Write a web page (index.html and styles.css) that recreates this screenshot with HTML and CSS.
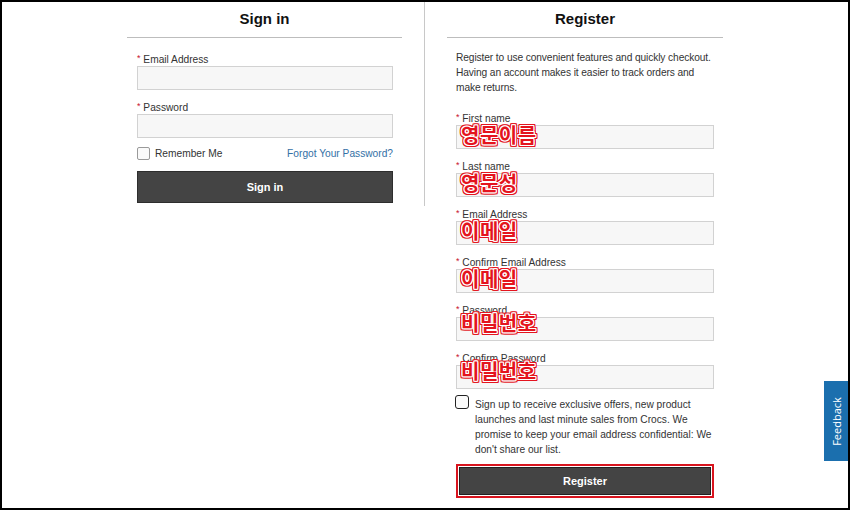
FILE: index.html
```html
<!DOCTYPE html>
<html lang="en">
<head>
    <meta charset="UTF-8">
    <meta name="viewport" content="width=device-width, initial-scale=1.0">
    <title>Sign in / Register</title>
    <link rel="stylesheet" href="styles.css">
</head>
<body>
    <div class="frame">
        <div class="account">
            <div class="column signin">
                <h2 class="title">Sign in</h2>
                <div class="field">
                    <label><span class="req">*</span> Email Address</label>
                    <input type="text">
                </div>
                <div class="field">
                    <label><span class="req">*</span> Password</label>
                    <input type="password">
                </div>
                <div class="remember-row">
                    <label class="check"><span class="box"></span> Remember Me</label>
                    <a href="#" class="forgot">Forgot Your Password?</a>
                </div>
                <button class="btn">Sign in</button>
            </div>

            <div class="column register">
                <h2 class="title">Register</h2>
                <p class="intro">Register to use convenient features and quickly checkout.<br>Having an account makes it easier to track orders and<br>make returns.</p>
                <div class="field">
                    <label><span class="req">*</span> First name</label>
                    <input type="text">
                    <span class="note">영문이름</span>
                </div>
                <div class="field">
                    <label><span class="req">*</span> Last name</label>
                    <input type="text">
                    <span class="note">영문성</span>
                </div>
                <div class="field">
                    <label><span class="req">*</span> Email Address</label>
                    <input type="text">
                    <span class="note">이메일</span>
                </div>
                <div class="field">
                    <label><span class="req">*</span> Confirm Email Address</label>
                    <input type="text">
                    <span class="note">이메일</span>
                </div>
                <div class="field">
                    <label><span class="req">*</span> Password</label>
                    <input type="password">
                    <span class="note low">비밀번호</span>
                </div>
                <div class="field">
                    <label><span class="req">*</span> Confirm Password</label>
                    <input type="password">
                    <span class="note low">비밀번호</span>
                </div>
                <div class="optin">
                    <span class="box dark"></span>
                    <p>Sign up to receive exclusive offers, new product launches and last minute sales from Crocs. We promise to keep your email address confidential: We don't share our list.</p>
                </div>
                <div class="btn-frame">
                    <button class="btn">Register</button>
                </div>
            </div>
        </div>
        <div class="feedback"><span>Feedback</span></div>
    </div>
</body>
</html>
```

FILE: styles.css
```css
* {
    box-sizing: border-box;
}
body {
    margin: 0;
    font-family: "Liberation Sans", Arial, sans-serif;
    color: #333;
    font-size: 10.2px;
}
.frame {
    position: relative;
    width: 850px;
    height: 510px;
    border: 2px solid #000;
    background: #fff;
    overflow: hidden;
}
.account {
    display: flex;
    align-items: flex-start;
    padding-left: 125px;
}
.column {
    width: 276px;
}
.signin {
    width: 298px;
    height: 204px;
    padding-right: 22px;
    border-right: 1px solid #c8c8c8;
    margin-right: 22px;
}
.title {
    margin: 0;
    height: 36px;
    padding-top: 8px;
    font-size: 15px;
    line-height: 17px;
    text-align: center;
    color: #111;
    border-bottom: 1px solid #bdbdbd;
}
.signin .title {
    margin-bottom: 13px;
}
.signin .field,
.signin .remember-row,
.signin .btn {
    margin-left: 10px;
    margin-right: 9px;
}
.register .title {
    margin-bottom: 12px;
}
.register > *:not(.title) {
    margin-left: 9px;
    margin-right: 9px;
}
.intro {
    margin-top: 0;
    margin-bottom: 15px;
    line-height: 15px;
    white-space: nowrap;
    letter-spacing: -0.1px;
}
.field {
    position: relative;
    margin-bottom: 9px;
}
.field label {
    display: block;
    height: 15px;
    line-height: 14px;
}
.req {
    color: #c8102e;
    font-size: 9px;
    vertical-align: 2px;
}
.field input {
    display: block;
    width: 100%;
    height: 24px;
    margin: 0;
    border: 1px solid #d2d2d2;
    background: #f7f7f7;
}
.note {
    position: absolute;
    left: 5px;
    top: 14px;
    font-family: "Noto Sans CJK KR", sans-serif;
    font-weight: 700;
    font-size: 20px;
    line-height: 21px;
    letter-spacing: 0.5px;
    color: #e4141e;
    text-shadow:
        1px 0 0 #fff, -1px 0 0 #fff, 0 1px 0 #fff, 0 -1px 0 #fff,
        1px 1px 0 #fff, -1px -1px 0 #fff, 1px -1px 0 #fff, -1px 1px 0 #fff,
        2px 0 0 #e4141e, -2px 0 0 #e4141e, 0 2px 0 #e4141e, 0 -2px 0 #e4141e,
        2px 2px 0 #e4141e, -2px -2px 0 #e4141e, 2px -2px 0 #e4141e, -2px 2px 0 #e4141e,
        2px 1px 0 #e4141e, -2px 1px 0 #e4141e, 1px 2px 0 #e4141e, 1px -2px 0 #e4141e,
        2px -1px 0 #e4141e, -2px -1px 0 #e4141e, -1px 2px 0 #e4141e, -1px -2px 0 #e4141e;
}
.note.low {
    top: 10px;
}
.remember-row {
    display: flex;
    align-items: center;
    justify-content: space-between;
    height: 13px;
    margin-bottom: 11px;
}
.check {
    display: flex;
    align-items: center;
    gap: 5px;
}
.box {
    display: inline-block;
    width: 13px;
    height: 13px;
    border: 1px solid #9a9a9a;
    border-radius: 2px;
    background: #fafafa;
}
.box.dark {
    flex: none;
    width: 14px;
    height: 14px;
    border: 1.5px solid #222;
    border-radius: 3px;
    margin-top: -2px;
    margin-left: -1px;
}
.forgot {
    color: #3470a5;
    text-decoration: none;
}
.btn {
    display: block;
    width: 256px;
    height: 32px;
    border: 1px solid #2d2d2d;
    background: #444;
    color: #fff;
    font-family: "Liberation Sans", Arial, sans-serif;
    font-weight: bold;
    font-size: 11px;
}
.optin {
    display: flex;
    gap: 6px;
    margin-top: -1px;
}
.optin p {
    margin: 0;
    line-height: 15px;
}
.btn-frame {
    margin-top: 7px;
    border: 2px solid #d8141e;
    padding: 1px;
}
.btn-frame .btn {
    width: 100%;
    height: 28px;
    border-color: #222;
}
.feedback {
    position: absolute;
    right: 0;
    top: 379px;
    width: 24px;
    height: 80px;
    background: #1b6fae;
    display: flex;
    align-items: center;
    justify-content: center;
}
.feedback span {
    transform: rotate(-90deg);
    color: #fff;
    font-size: 11px;
    font-family: "Open Sans", sans-serif;
    white-space: nowrap;
}
```
